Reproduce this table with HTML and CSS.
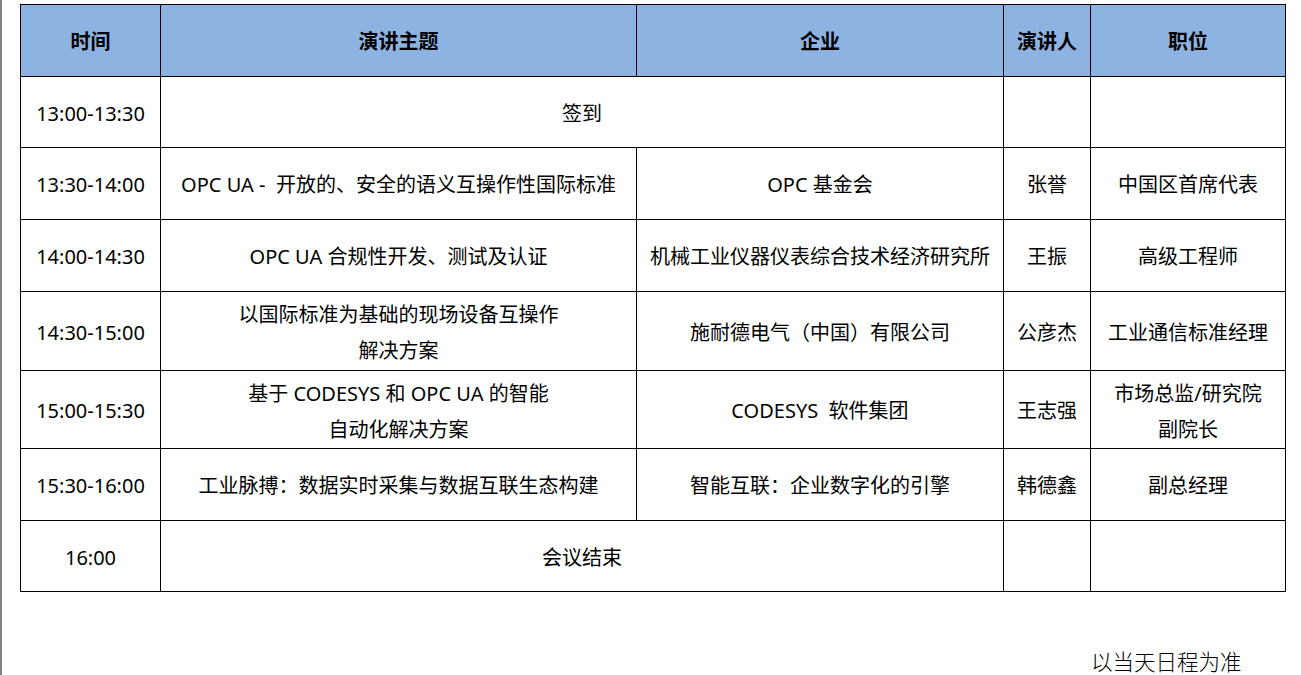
FILE: index.html
```html
<!DOCTYPE html>
<html lang="zh-CN">
<head>
<meta charset="utf-8">
<title>会议日程</title>
<link rel="stylesheet" href="styles.css">
</head>
<body>
<div class="page">
  <table class="agenda">
    <colgroup>
      <col class="c-time">
      <col class="c-topic">
      <col class="c-org">
      <col class="c-speaker">
      <col class="c-title">
    </colgroup>
    <thead>
      <tr class="h72">
        <th>时间</th>
        <th>演讲主题</th>
        <th>企业</th>
        <th>演讲人</th>
        <th>职位</th>
      </tr>
    </thead>
    <tbody>
      <tr class="h71">
        <td>13:00-13:30</td>
        <td colspan="2">签到</td>
        <td></td>
        <td></td>
      </tr>
      <tr class="h72">
        <td>13:30-14:00</td>
        <td>OPC UA -&nbsp; 开放的、安全的语义互操作性国际标准</td>
        <td>OPC 基金会</td>
        <td>张誉</td>
        <td>中国区首席代表</td>
      </tr>
      <tr class="h72">
        <td>14:00-14:30</td>
        <td>OPC UA 合规性开发、测试及认证</td>
        <td>机械工业仪器仪表综合技术经济研究所</td>
        <td>王振</td>
        <td>高级工程师</td>
      </tr>
      <tr class="h79">
        <td>14:30-15:00</td>
        <td class="two">以国际标准为基础的现场设备互操作<br>解决方案</td>
        <td>施耐德电气（中国）有限公司</td>
        <td>公彦杰</td>
        <td>工业通信标准经理</td>
      </tr>
      <tr class="h78">
        <td>15:00-15:30</td>
        <td class="two">基于 CODESYS 和 OPC UA 的智能<br>自动化解决方案</td>
        <td>CODESYS&nbsp; 软件集团</td>
        <td>王志强</td>
        <td class="two">市场总监/研究院<br>副院长</td>
      </tr>
      <tr class="h72">
        <td>15:30-16:00</td>
        <td>工业脉搏：数据实时采集与数据互联生态构建</td>
        <td>智能互联：企业数字化的引擎</td>
        <td>韩德鑫</td>
        <td>副总经理</td>
      </tr>
      <tr class="h71">
        <td>16:00</td>
        <td colspan="2">会议结束</td>
        <td></td>
        <td></td>
      </tr>
    </tbody>
  </table>
  <p class="note">以当天日程为准</p>
</div>
</body>
</html>
```

FILE: styles.css
```css
html, body {
  margin: 0;
  padding: 0;
  background: #ffffff;
}

body {
  font-family: "Noto Sans", "Noto Sans CJK SC", sans-serif;
  color: #000000;
  overflow: hidden;
}

.page {
  box-sizing: border-box;
  height: 675px;
  border-left: 2px solid #808080;
  padding: 4px 0 0 18px;
}

.agenda {
  border-collapse: collapse;
  table-layout: fixed;
  width: 1265px;
}

.c-time { width: 140px; }
.c-topic { width: 476px; }
.c-org { width: 367px; }
.c-speaker { width: 87px; }
.c-title { width: 195px; }

.agenda th,
.agenda td {
  border: 1px solid #000000;
  padding: 3px 0 0 0;
  text-align: center;
  vertical-align: middle;
  font-size: 20px;
  line-height: 38px;
  white-space: nowrap;
}

.agenda td.two {
  padding-top: 4px;
  line-height: 36px;
}

.agenda th {
  background: #8db3e2;
  font-weight: 700;
}

.h71 { height: 71px; }
.h72 { height: 72px; }
.h78 { height: 78px; }
.h79 { height: 79px; }

.note {
  margin: 59px 0 0 0;
  padding-left: 1071px;
  font-family: "Liberation Serif", "Noto Sans CJK SC", serif;
  font-size: 21.5px;
  line-height: 24px;
  font-weight: 300;
}
```
